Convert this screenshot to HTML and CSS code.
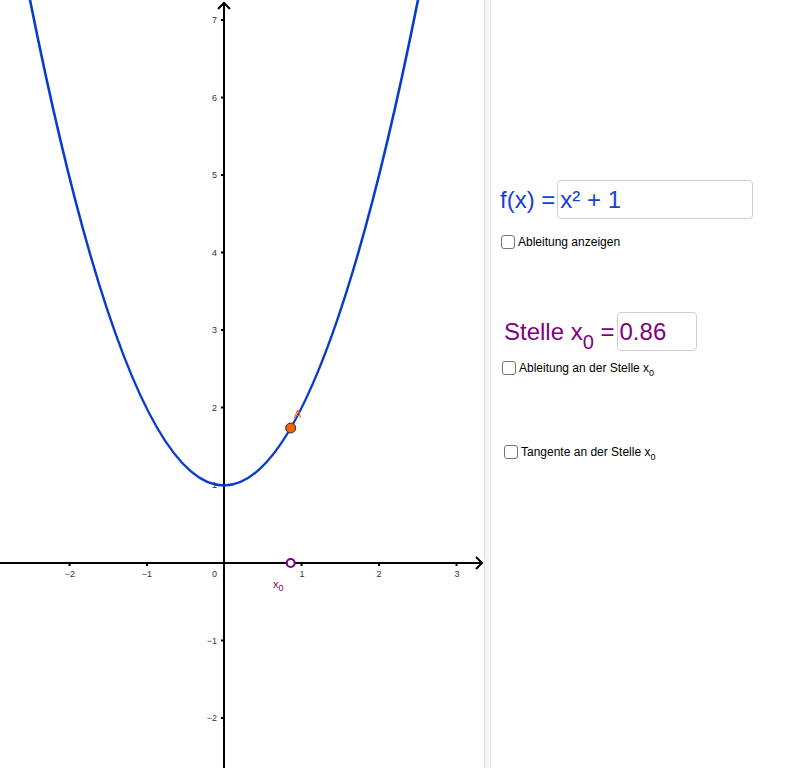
FILE: index.html
```html
<!DOCTYPE html>
<html>
<head>
<meta charset="utf-8">
<link rel="stylesheet" href="styles.css">
</head>
<body>
<div class="app">
  <div class="graphics">
    <svg class="plot" width="484" height="768" viewBox="0 0 484 768">
      <!-- axes -->
      <line x1="0" y1="563" x2="482" y2="563" class="axis"/>
      <line x1="224" y1="2" x2="224" y2="768" class="axis"/>
      <polyline points="476,557 482,563 476,569" class="arrow"/>
      <polyline points="218,9 224,3 230,9" class="arrow"/>
      <!-- ticks -->
      <g class="tick">
        <line x1="69.5" y1="563" x2="69.5" y2="566"/>
        <line x1="147" y1="563" x2="147" y2="566"/>
        <line x1="301.5" y1="563" x2="301.5" y2="566"/>
        <line x1="379" y1="563" x2="379" y2="566"/>
        <line x1="456.5" y1="563" x2="456.5" y2="566"/>
        <line x1="221" y1="20" x2="224" y2="20"/>
        <line x1="221" y1="97.5" x2="224" y2="97.5"/>
        <line x1="221" y1="175" x2="224" y2="175"/>
        <line x1="221" y1="252.5" x2="224" y2="252.5"/>
        <line x1="221" y1="330" x2="224" y2="330"/>
        <line x1="221" y1="407.5" x2="224" y2="407.5"/>
        <line x1="221" y1="485" x2="224" y2="485"/>
        <line x1="221" y1="640.5" x2="224" y2="640.5"/>
        <line x1="221" y1="718" x2="224" y2="718"/>
      </g>
      <g class="lbl-x">
        <text x="70" y="577">−2</text>
        <text x="147" y="577">−1</text>
        <text x="302" y="577">1</text>
        <text x="379" y="577">2</text>
        <text x="457" y="577">3</text>
      </g>
      <text x="217" y="577" class="lbl-y">0</text>
      <g class="lbl-y">
        <text x="217" y="23">7</text>
        <text x="217" y="100.5">6</text>
        <text x="217" y="178">5</text>
        <text x="217" y="255.5">4</text>
        <text x="217" y="333">3</text>
        <text x="217" y="410.5">2</text>
        <text x="217" y="488">1</text>
        <text x="217" y="643.5">−1</text>
        <text x="217" y="721">−2</text>
      </g>
      <!-- function -->
      <path d="M22.5,-38.4 Q224,1009.4 425.5,-38.4" class="curve"/>
      <!-- point A -->
      <circle cx="290.7" cy="428" r="5" class="pt-a"/>
      <text x="294" y="418" class="lbl-a">A</text>
      <!-- x0 -->
      <circle cx="290.7" cy="563" r="4" class="pt-x0"/>
      <text x="273" y="588" class="lbl-x0">x<tspan dy="3" font-size="9">0</tspan></text>
    </svg>
  </div>
  <div class="divider"></div>
  <div class="algebra">
    <div class="row row-f">
      <span class="lbl-f">f(x) =</span>
      <div class="input input-f">x² + 1</div>
    </div>
    <label class="check check-1"><span class="box"></span><span>Ableitung anzeigen</span></label>
    <div class="row row-s">
      <span class="lbl-s">Stelle x<sub>0</sub> =</span>
      <div class="input input-s">0.86</div>
    </div>
    <label class="check check-2"><span class="box"></span><span>Ableitung an der Stelle x<sub>0</sub></span></label>
    <label class="check check-3"><span class="box"></span><span>Tangente an der Stelle x<sub>0</sub></span></label>
  </div>
</div>
</body>
</html>
```

FILE: styles.css
```css
html, body {
  margin: 0;
  padding: 0;
  background: #ffffff;
}
body {
  font-family: "Liberation Sans", Arial, sans-serif;
}
.app {
  display: flex;
  width: 800px;
  height: 768px;
  overflow: hidden;
}
.graphics {
  width: 484px;
  height: 768px;
  flex: none;
}
.plot {
  display: block;
}
.axis {
  stroke: #000;
  stroke-width: 2;
}
.arrow {
  fill: none;
  stroke: #000;
  stroke-width: 2;
}
.tick line {
  stroke: #000;
  stroke-width: 2;
}
.lbl-x text {
  font-family: "Liberation Sans", Arial, sans-serif;
  font-size: 9px;
  fill: #333;
  text-anchor: middle;
}
.lbl-y, .lbl-y text {
  font-family: "Liberation Sans", Arial, sans-serif;
  font-size: 9px;
  fill: #333;
  text-anchor: end;
}
.curve {
  fill: none;
  stroke: #0a3ccc;
  stroke-width: 2.6;
}
.pt-a {
  fill: #f0620a;
  stroke: #3a2a20;
  stroke-width: 1;
}
.lbl-a {
  font-family: "Liberation Sans", Arial, sans-serif;
  font-size: 11px;
  fill: #f0620a;
}
.pt-x0 {
  fill: #fff;
  stroke: #800080;
  stroke-width: 2.2;
}
.lbl-x0 {
  font-family: "Liberation Sans", Arial, sans-serif;
  font-size: 11px;
  fill: #800080;
}
.divider {
  width: 5px;
  flex: none;
  border-left: 1px solid #dcdcdc;
  border-right: 1px solid #e4e4e4;
  background: #f6f6f6;
}
.algebra {
  flex: 1;
  display: flex;
  flex-direction: column;
  align-items: flex-start;
  padding-top: 180px;
}
.row {
  display: flex;
  align-items: center;
}
.input {
  box-sizing: border-box;
  border: 1px solid #d0d0d0;
  border-radius: 4px;
  height: 39px;
  font-size: 24px;
  line-height: 37px;
  padding-left: 2px;
}
.row-f {
  margin-left: 9px;
}
.lbl-f {
  color: #1a3fd1;
  font-size: 24px;
  margin-right: 2px;
}
.input-f {
  width: 196px;
  color: #1a3fd1;
}
.row-s {
  margin-left: 13px;
  margin-top: 62px;
}
.lbl-s {
  color: #800080;
  font-size: 24px;
  margin-right: 2px;
  padding-top: 1px;
}
.lbl-s sub {
  font-size: 20px;
  vertical-align: -9px;
  line-height: 0;
}
.input-s {
  width: 80px;
  color: #800080;
}
.check {
  display: flex;
  align-items: center;
  font-size: 12px;
  color: #000;
  height: 16px;
}
.check sub {
  font-size: 9px;
  vertical-align: -4px;
  line-height: 0;
}
.box {
  box-sizing: border-box;
  width: 14px;
  height: 14px;
  border: 1.5px solid #777;
  border-radius: 3px;
  margin-right: 3px;
  background: #fff;
}
.check-1 {
  margin-left: 10px;
  margin-top: 15px;
}
.check-2 {
  margin-left: 11px;
  margin-top: 9px;
}
.check-3 {
  margin-left: 13px;
  margin-top: 68px;
}
```
